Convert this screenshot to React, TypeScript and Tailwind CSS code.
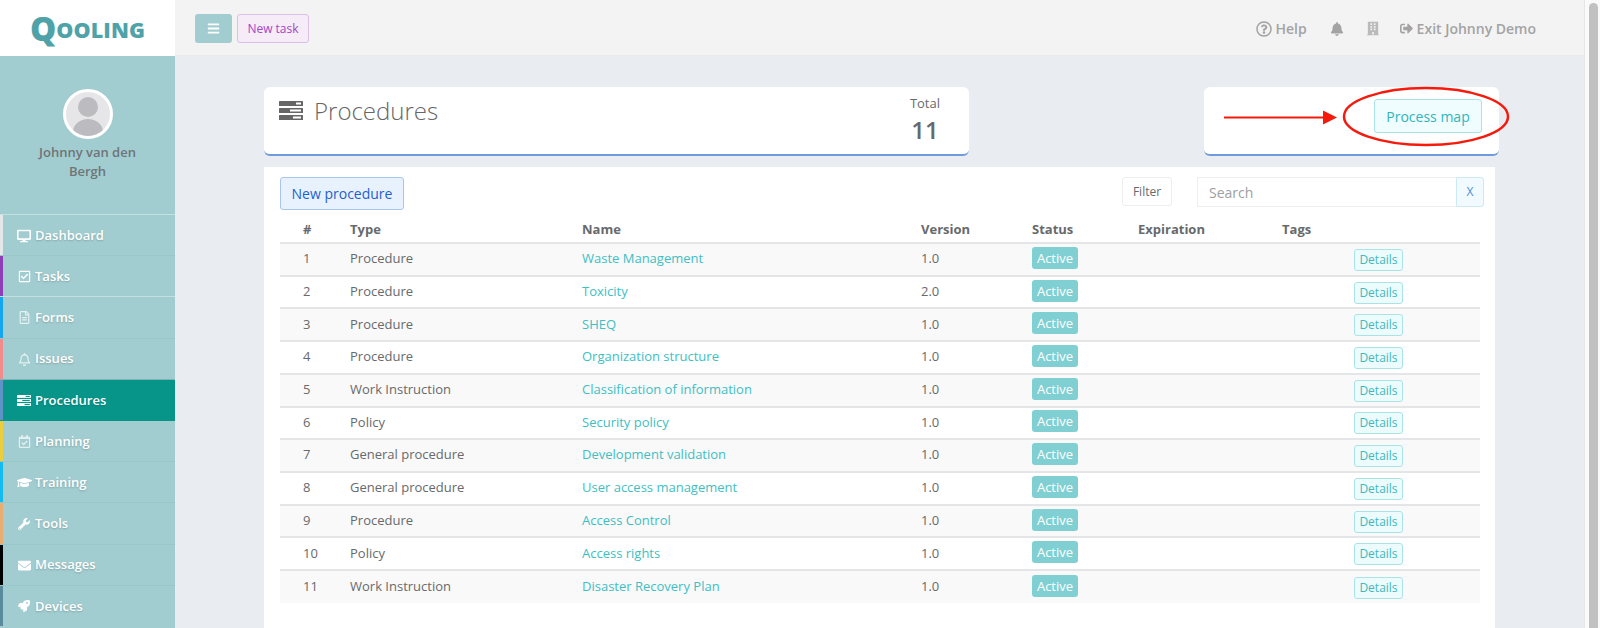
import {
  FaBars,
  FaBell,
  FaBuilding,
  FaDesktop,
  FaEnvelope,
  FaGraduationCap,
  FaRegBell,
  FaRegCalendarCheck,
  FaRegCheckSquare,
  FaRegFileAlt,
  FaRegQuestionCircle,
  FaRocket,
  FaSignOutAlt,
  FaWrench,
} from 'react-icons/fa'

function ProceduresIcon({ className }: { className?: string }) {
  return (
    <svg viewBox="0 0 24 19" className={className} fill="currentColor">
      <rect x="0" y="0" width="24" height="5" rx="0.5" />
      <rect x="0" y="7" width="24" height="5" rx="0.5" />
      <rect x="0" y="14" width="24" height="5" rx="0.5" />
      <rect x="17" y="1.5" width="5" height="2" fill="#fff" />
      <rect x="11" y="8.5" width="11" height="2" fill="#fff" />
      <rect x="14" y="15.5" width="8" height="2" fill="#fff" />
    </svg>
  )
}

function WhiteProceduresIcon() {
  return (
    <svg viewBox="0 0 24 19" className="h-[11px] w-[14px]" fill="#fff">
      <rect x="0" y="0" width="24" height="5" />
      <rect x="0" y="7" width="24" height="5" />
      <rect x="0" y="14" width="24" height="5" />
      <rect x="15" y="1.5" width="7" height="2" fill="#07958a" />
      <rect x="9" y="8.5" width="13" height="2" fill="#07958a" />
      <rect x="13" y="15.5" width="9" height="2" fill="#07958a" />
    </svg>
  )
}

const navItems = [
  { label: 'Dashboard', strip: 'bg-[#e4e6e8]', icon: <FaDesktop className="h-[14px] w-[14px]" />, divider: 'border-t-[#c3e0e2]' },
  { label: 'Tasks', strip: 'bg-[#8e3fb5]', icon: <FaRegCheckSquare className="h-[13px] w-[13px]" />, divider: 'border-t-[#99c6c9]' },
  { label: 'Forms', strip: 'bg-[#12a7f0]', icon: <FaRegFileAlt className="h-[13px] w-[13px] opacity-70" />, divider: 'border-t-[#c3e0e2]' },
  { label: 'Issues', strip: 'bg-[#f28b8b]', icon: <FaRegBell className="h-[13px] w-[13px] opacity-70" />, divider: 'border-t-[#99c6c9]' },
  { label: 'Procedures', strip: 'bg-[#5f93c8]', icon: <WhiteProceduresIcon />, divider: 'border-t-[#7fb3b5]', active: true },
  { label: 'Planning', strip: 'bg-[#ecce3c]', icon: <FaRegCalendarCheck className="h-[13px] w-[13px] opacity-70" />, divider: 'border-t-[#07958a]' },
  { label: 'Training', strip: 'bg-[#12bcf0]', icon: <FaGraduationCap className="h-[15px] w-[15px]" />, divider: 'border-t-[#99c6c9]' },
  { label: 'Tools', strip: 'bg-[#e9ad73]', icon: <FaWrench className="h-[12px] w-[12px]" />, divider: 'border-t-[#99c6c9]' },
  { label: 'Messages', strip: 'bg-black', icon: <FaEnvelope className="h-[13px] w-[13px]" />, divider: 'border-t-[#99c6c9]' },
  { label: 'Devices', strip: 'bg-[#5a8b9c]', icon: <FaRocket className="h-[12px] w-[12px]" />, divider: 'border-t-[#99c6c9]' },
]

const procedures = [
  { type: 'Procedure', name: 'Waste Management', version: '1.0' },
  { type: 'Procedure', name: 'Toxicity', version: '2.0' },
  { type: 'Procedure', name: 'SHEQ', version: '1.0' },
  { type: 'Procedure', name: 'Organization structure', version: '1.0' },
  { type: 'Work Instruction', name: 'Classification of information', version: '1.0' },
  { type: 'Policy', name: 'Security policy', version: '1.0' },
  { type: 'General procedure', name: 'Development validation', version: '1.0' },
  { type: 'General procedure', name: 'User access management', version: '1.0' },
  { type: 'Procedure', name: 'Access Control', version: '1.0' },
  { type: 'Policy', name: 'Access rights', version: '1.0' },
  { type: 'Work Instruction', name: 'Disaster Recovery Plan', version: '1.0' },
]

function Sidebar() {
  return (
    <aside className="flex w-[175px] shrink-0 flex-col bg-[#a2cdd0]">
      <div className="flex h-[56px] items-center justify-center bg-white font-['Open_Sans',sans-serif] font-extrabold text-[#4fa3a8]">
        <span className="text-[33px] leading-none">Q</span>
        <span className="mt-[3px] text-[21.5px] leading-none tracking-[0.1px]">OOLING</span>
      </div>
      <div className="flex h-[158px] flex-col items-center pt-[33px]">
        <div className="h-[50px] w-[50px] overflow-hidden rounded-full border-[3px] border-white bg-[#e6e6e8]">
          <svg viewBox="0 0 44 44" className="h-full w-full" fill="#bcbcc0">
            <circle cx="22" cy="15" r="10" />
            <ellipse cx="22" cy="40" rx="15" ry="13" />
          </svg>
        </div>
        <div className="mt-[4px] w-[110px] text-center text-[13px] leading-[19px] font-semibold text-[#6f7478]">
          Johnny van den Bergh
        </div>
      </div>
      <nav className="flex flex-col">
        {navItems.map((item) => (
          <div
            key={item.label}
            className={`flex h-[41.2px] border-t ${item.divider} ${item.active ? 'bg-[#07958a]' : ''}`}
          >
            <div className={`w-[3px] ${item.strip}`} />
            <div className="flex items-center pt-[1px] pl-[13px] text-[13px] font-semibold text-white [text-shadow:0_1px_2px_rgba(0,0,0,0.2)]">
              <span className="flex w-[16px] justify-center">{item.icon}</span>
              <span className="ml-[3px]">{item.label}</span>
            </div>
          </div>
        ))}
      </nav>
    </aside>
  )
}

function Topbar() {
  return (
    <header className="flex h-[56px] shrink-0 items-center border-b border-[#e7eaec] bg-[#f3f3f4] pt-[2px] pr-[48px] pl-[20px]">
      <button className="flex h-[29px] w-[37px] items-center justify-center rounded-[3px] bg-[#a2cdd0] text-white">
        <FaBars className="h-[13px] w-[13px]" />
      </button>
      <button className="ml-[5px] h-[29px] w-[72px] rounded-[3px] border border-[#dcbfe6] bg-[#f5ecf8] text-[12px] text-[#a345c6]">
        New task
      </button>
      <div className="ml-auto flex items-center text-[14px] font-semibold text-[#a3a3a3]">
        <FaRegQuestionCircle className="h-[16px] w-[16px]" />
        <span className="ml-[3px]">Help</span>
        <FaBell className="ml-[23px] h-[14px] w-[14px]" />
        <FaBuilding className="ml-[23px] h-[15px] w-[12px] opacity-70" />
        <FaSignOutAlt className="ml-[21px] h-[13px] w-[13px]" />
        <span className="ml-[4px]">Exit Johnny Demo</span>
      </div>
    </header>
  )
}

function ProcedureTable() {
  return (
    <table className="w-[1200px] table-fixed border-collapse text-[13px] text-[#676a6c]">
      <colgroup>
        <col className="w-[70px]" />
        <col className="w-[232px]" />
        <col className="w-[339px]" />
        <col className="w-[111px]" />
        <col className="w-[106px]" />
        <col className="w-[144px]" />
        <col className="w-[72px]" />
        <col className="w-[126px]" />
      </colgroup>
      <thead>
        <tr className="h-[33px] text-left">
          <th className="pt-[8px] pl-[23px] font-bold">#</th>
          <th className="pt-[8px] font-bold">Type</th>
          <th className="pt-[8px] font-bold">Name</th>
          <th className="pt-[8px] font-bold">Version</th>
          <th className="pt-[8px] font-bold">Status</th>
          <th className="pt-[8px] font-bold">Expiration</th>
          <th className="pt-[8px] font-bold">Tags</th>
          <th />
        </tr>
      </thead>
      <tbody>
        {procedures.map((p, i) => (
          <tr key={p.name} className={`h-[32.72px] border-t-2 border-[#e4e5e6] ${i % 2 === 0 ? 'bg-[#f9f9f9]' : 'bg-white'}`}>
            <td className="pb-[1px] pl-[23px]">{i + 1}</td>
            <td className="pb-[1px]">{p.type}</td>
            <td className="pb-[1px] text-[#3dbfc4]">{p.name}</td>
            <td className="pb-[1px]">{p.version}</td>
            <td>
              <span className="mb-[3px] block h-[22px] w-[46px] rounded-[3px] bg-[#80d0d3] text-center text-[13px] leading-[22px] text-white">
                Active
              </span>
            </td>
            <td />
            <td />
            <td>
              <button className="mt-[1px] block h-[22px] w-[49px] rounded-[3px] border border-[#a9e3e6] bg-[#ecfbfc] text-[12px] leading-[20px] text-[#3fb9be]">
                Details
              </button>
            </td>
          </tr>
        ))}
      </tbody>
    </table>
  )
}

export default function App() {
  return (
    <div className="flex h-[628px] w-[1600px] overflow-hidden bg-[#e9edf2] font-['Open_Sans',sans-serif] text-[#676a6c]">
      <Sidebar />
      <main className="flex min-w-0 flex-1 flex-col">
        <Topbar />
        <div className="pt-[31px] pl-[89px]">
          <div className="flex">
            <section className="flex h-[69px] w-[705px] justify-between rounded-md border-b-2 border-[#6f9bdc] bg-white pr-[29px] pl-[15px]">
              <div className="flex items-start pt-[9px]">
                <ProceduresIcon className="mt-[5px] h-[19px] w-[24px] text-[#666]" />
                <h1 className="ml-[11px] text-[24px] leading-[30px] font-light text-[#666]">Procedures</h1>
              </div>
              <div className="pt-[7px] text-center">
                <div className="text-[13px] leading-[18px]">Total</div>
                <div className="mt-[2px] text-[24px] leading-[32px] font-semibold">11</div>
              </div>
            </section>
            <section className="relative ml-[235px] flex h-[69px] w-[295px] items-start justify-end rounded-md border-b-2 border-[#6f9bdc] bg-white pt-[12px] pr-[17px]">
              <button className="h-[34px] w-[108px] rounded-[3px] border border-[#a9e3e6] bg-[#f0fdfe] text-[14px] text-[#2fb5bb]">
                Process map
              </button>
              <svg className="absolute top-0 left-0 overflow-visible" width="295" height="69" fill="none">
                <path d="M20 30.5H120" stroke="#f51a0c" strokeWidth="2" />
                <path d="M119 23.5L133 30.5L119 37.5Z" fill="#f51a0c" />
                <ellipse cx="222" cy="29.5" rx="82" ry="28.5" stroke="#f51a0c" strokeWidth="2.5" />
              </svg>
            </section>
          </div>
          <section className="mt-[11px] h-[461px] w-[1231px] bg-white pt-[10px] pl-[16px]">
            <div className="flex h-[33px] items-start">
              <button className="h-[33px] w-[124px] rounded-[3px] border border-[#a9c5ec] bg-[#e8f2fe] text-[14px] text-[#1e5fd1]">
                New procedure
              </button>
              <button className="ml-[718px] h-[29px] w-[50px] rounded-[3px] border border-[#eeeeee] bg-white text-[12px]">
                Filter
              </button>
              <div className="ml-[25px] flex h-[30px] w-[287px]">
                <div className="flex flex-1 items-center border border-r-0 border-[#eeeeee] pl-[11px] text-[14px] text-[#a0a0a0]">
                  Search
                </div>
                <div className="flex w-[28px] items-center justify-center rounded-r-[3px] border border-[#cde9f6] bg-[#f1faff] text-[12px] text-[#4a90d9]">
                  X
                </div>
              </div>
            </div>
            <ProcedureTable />
          </section>
        </div>
      </main>
      <div className="w-[16px] shrink-0 border-l border-[#e6e6e6] bg-[#fafafa] pt-[3px] pl-[4px]">
        <div className="h-[640px] w-[9px] rounded-full bg-[#c1c1c1]" />
      </div>
    </div>
  )
}
